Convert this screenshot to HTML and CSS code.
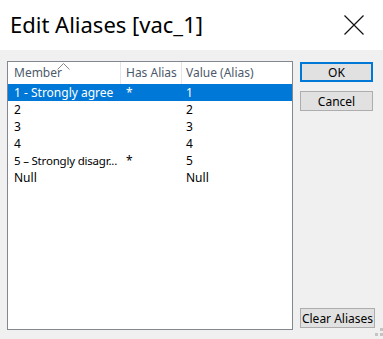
FILE: index.html
```html
<!DOCTYPE html>
<html lang="en">
<head>
    <meta charset="UTF-8">
    <title>Edit Aliases [vac_1]</title>
    <link rel="stylesheet" href="styles.css">
</head>
<body>
    <div class="dialogo">
        <!-- Barra de titulo -->
        <div class="titulo">
            <h1>Edit Aliases [vac_1]</h1>
            <svg class="cerrar" width="20" height="20" viewBox="0 0 20 20">
                <path d="M0.5 0.5 L19.5 19.5 M19.5 0.5 L0.5 19.5" stroke="#111" stroke-width="1.2" fill="none"/>
            </svg>
        </div>

        <div class="contenido">
            <!-- Lista de miembros -->
            <div class="lista">
                <div class="fila cabecera">
                    <div class="col col-miembro">Member
                        <svg class="orden" width="13" height="7" viewBox="0 0 13 7">
                            <path d="M0.5 6.5 L6.5 0.5 L12.5 6.5" stroke="#888" stroke-width="1" fill="none"/>
                        </svg>
                    </div>
                    <div class="col col-alias">Has Alias</div>
                    <div class="col col-valor">Value (Alias)</div>
                </div>
                <div class="fila seleccionada">
                    <div class="col col-miembro">1 - Strongly agree</div>
                    <div class="col col-alias">*</div>
                    <div class="col col-valor">1</div>
                </div>
                <div class="fila">
                    <div class="col col-miembro">2</div>
                    <div class="col col-alias"></div>
                    <div class="col col-valor">2</div>
                </div>
                <div class="fila">
                    <div class="col col-miembro">3</div>
                    <div class="col col-alias"></div>
                    <div class="col col-valor">3</div>
                </div>
                <div class="fila">
                    <div class="col col-miembro">4</div>
                    <div class="col col-alias"></div>
                    <div class="col col-valor">4</div>
                </div>
                <div class="fila">
                    <div class="col col-miembro corto">5 – Strongly disagr...</div>
                    <div class="col col-alias">*</div>
                    <div class="col col-valor">5</div>
                </div>
                <div class="fila">
                    <div class="col col-miembro">Null</div>
                    <div class="col col-alias"></div>
                    <div class="col col-valor">Null</div>
                </div>
            </div>

            <!-- Botones -->
            <div class="botones">
                <button class="boton principal">OK</button>
                <button class="boton">Cancel</button>
                <button class="boton limpiar">Clear Aliases</button>
            </div>
        </div>

        <div class="agarre">
            <span></span><span></span><span></span>
        </div>
    </div>
</body>
</html>
```

FILE: styles.css
```css
body {
    margin: 0;
    width: 383px;
    height: 339px;
    overflow: hidden;
    font-family: "Segoe UI", "Noto Sans", sans-serif;
    font-size: 12px;
    color: #000;
    background-color: #f0f0f0;
}

.dialogo {
    position: relative;
    height: 339px;
}

.titulo {
    height: 50px;
    background-color: white;
    display: flex;
    align-items: center;
    justify-content: space-between;
    padding: 0 19px 0 10px;
}

.titulo h1 {
    margin: 0;
    font-weight: normal;
    font-size: 22px;
    line-height: 1;
    padding-bottom: 2px;
}

.contenido {
    display: flex;
    gap: 7px;
    padding: 11px 0 0 7px;
}

.lista {
    width: 284px;
    height: 267px;
    background-color: white;
    border: 1px solid #828790;
}

.fila {
    display: flex;
    height: 17px;
    line-height: 17px;
}

.cabecera {
    height: 22px;
    line-height: 21px;
    color: #4c5a6b;
}

.cabecera .col-miembro,
.cabecera .col-alias {
    border-right: 1px solid #e5e5e5;
}

.col {
    white-space: nowrap;
    box-sizing: border-box;
}

.col-miembro {
    width: 113px;
    padding-left: 6px;
    position: relative;
}

.corto {
    font-size: 11.5px;
    letter-spacing: -0.2px;
}

.col-alias {
    width: 61px;
    padding-left: 5px;
}

.col-valor {
    flex: 1;
    padding-left: 4px;
}

.orden {
    position: absolute;
    left: 49px;
    top: 1px;
}

.seleccionada {
    background-color: #0078d7;
    color: white;
}

.botones {
    display: flex;
    flex-direction: column;
    gap: 9px;
    padding-top: 1px;
    height: 266px;
}

.boton {
    width: 73px;
    height: 20px;
    padding: 0;
    font-family: inherit;
    font-size: 12px;
    color: #000;
    background-color: #e1e1e1;
    border: 1px solid #adadad;
}

.principal {
    border: 2px solid #0078d7;
}

.limpiar {
    width: 75px;
    margin-top: auto;
}

.agarre {
    position: absolute;
    right: 0;
    bottom: 0;
    width: 11px;
    height: 11px;
}

.agarre span {
    position: absolute;
    width: 3px;
    height: 3px;
    background-color: #c4c4c4;
}

.agarre span:nth-child(1) { right: 0; top: 0; }
.agarre span:nth-child(2) { right: 0; top: 5px; }
.agarre span:nth-child(3) { right: 5px; top: 5px; }
```
